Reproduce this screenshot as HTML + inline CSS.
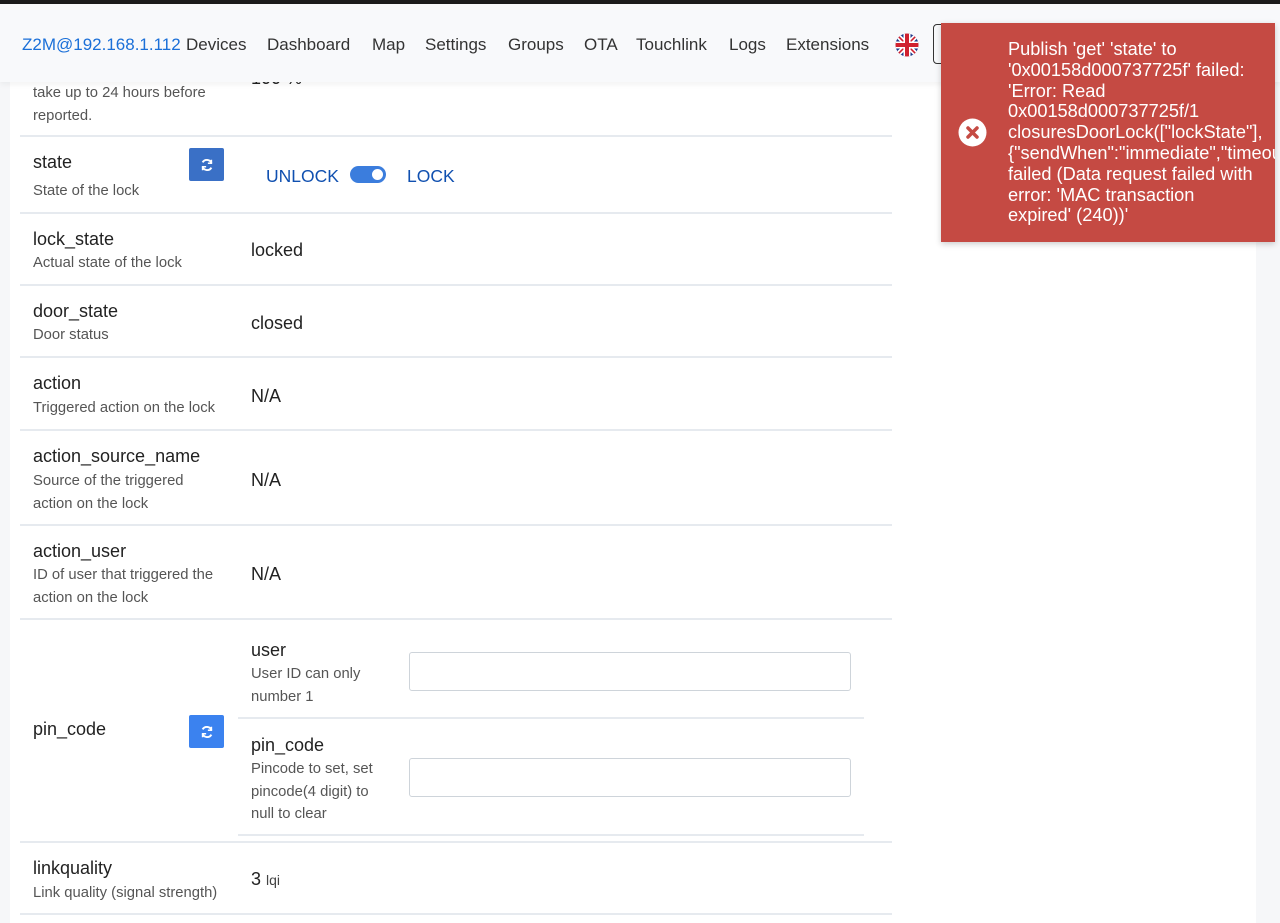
<!DOCTYPE html>
<html><head><meta charset="utf-8"><style>
*{box-sizing:border-box;margin:0;padding:0}
body{width:1280px;height:923px;overflow:hidden;background:#f6f7f9;font-family:"Liberation Sans",sans-serif;position:relative;color:#212529}
.top{position:absolute;left:0;top:0;width:1280px;height:4px;background:#1c1c1c}
.card{position:absolute;left:10px;top:4px;width:1246px;height:919px;background:#fff}
.nav{position:absolute;left:0;top:4px;width:1280px;height:78px;background:#f8f9fb;box-shadow:0 2px 6px rgba(0,0,0,.06);z-index:2}
.nav span{position:absolute;top:31px;font-size:17px;color:#333}
.row{position:absolute;left:20px;width:872px;border-bottom:2px solid #e6eaef}
.t{position:absolute;left:13px;font-size:18px;color:#222}
.d{position:absolute;left:13px;font-size:14.8px;color:#555;line-height:22.5px;width:190px}
.v{position:absolute;left:231px;font-size:18px;color:#222}
.btn{position:absolute;width:35px;height:33px;border-radius:2px;display:flex;align-items:center;justify-content:center}
.inp{position:absolute;left:409px;width:442px;height:39px;border:1px solid #ced4da;border-radius:3px}
.toast{position:absolute;left:941px;top:23px;width:334px;height:219px;background:#c54a43;z-index:3;box-shadow:0 2px 6px rgba(0,0,0,.2);overflow:hidden}
.toast p{position:absolute;left:67px;top:16px;width:300px;color:#fff;font-size:18.2px;line-height:20.8px;white-space:nowrap}
</style></head><body>
<div class="top"></div>
<div class="card"></div>
<div class="nav">
<span style="left:22px;color:#1a6fd8">Z2M@192.168.1.112</span>
<span style="left:186px">Devices</span><span style="left:267px">Dashboard</span><span style="left:372px">Map</span><span style="left:425px">Settings</span><span style="left:508px">Groups</span><span style="left:584px">OTA</span><span style="left:636px">Touchlink</span><span style="left:729px">Logs</span><span style="left:786px">Extensions</span>
<svg style="position:absolute;left:895px;top:29px" width="24" height="24" viewBox="0 0 24 24"><clipPath id="c"><circle cx="12" cy="12" r="11.5"/></clipPath><g clip-path="url(#c)"><rect width="24" height="24" fill="#1f3a8a"/><path d="M0 0L24 24M24 0L0 24" stroke="#fff" stroke-width="5"/><path d="M0 0L24 24M24 0L0 24" stroke="#d0202e" stroke-width="1.6"/><path d="M12 0V24M0 12H24" stroke="#fff" stroke-width="7"/><path d="M12 0V24M0 12H24" stroke="#d0202e" stroke-width="4"/></g></svg>
<div style="position:absolute;left:933px;top:20px;width:150px;height:40px;border:1px solid #333;border-radius:4px"></div>
<div style="position:absolute;left:1114px;top:20px;width:45px;height:40px;background:#ccc;border-radius:4px"></div>
</div>
<div class="row" style="top:82px;height:55px"><div class="d" style="top:0">take up to 24 hours before reported.</div><div class="v" style="top:-14px">100 %</div></div>
<div class="row" style="top:137px;height:77px"><div class="t" style="top:15px">state</div><div class="d" style="top:43px">State of the lock</div>
<div class="btn" style="left:169px;top:11px;background:#3a70c6"><svg width="14" height="14" viewBox="0 0 16 16" fill="none" stroke="#fff" stroke-width="2.2"><path d="M13 6A5.5 5.5 0 0 0 3 5M3 10a5.5 5.5 0 0 0 10 1"/><path d="M13 2v4H9M3 14v-4h4" stroke-width="1.8"/></svg></div>
<div style="position:absolute;left:246px;top:29px;font-size:17.5px;color:#1050b0">UNLOCK</div>
<div style="position:absolute;left:330px;top:29px;width:36px;height:17px;border-radius:9px;background:#3b7ddd"><div style="position:absolute;right:3px;top:3px;width:11px;height:11px;border-radius:50%;background:#fff"></div></div>
<div style="position:absolute;left:387px;top:29px;font-size:17.5px;color:#1050b0">LOCK</div></div>
<div class="row" style="top:214px;height:72px"><div class="t" style="top:15px">lock_state</div><div class="d" style="top:38px">Actual state of the lock</div><div class="v" style="top:26px">locked</div></div>
<div class="row" style="top:286px;height:72px"><div class="t" style="top:15px">door_state</div><div class="d" style="top:38px">Door status</div><div class="v" style="top:27px">closed</div></div>
<div class="row" style="top:358px;height:73px"><div class="t" style="top:15px">action</div><div class="d" style="top:39px;width:200px">Triggered action on the lock</div><div class="v" style="top:28px">N/A</div></div>
<div class="row" style="top:431px;height:95px"><div class="t" style="top:15px">action_source_name</div><div class="d" style="top:39px;width:170px">Source of the triggered action on the lock</div><div class="v" style="top:39px">N/A</div></div>
<div class="row" style="top:526px;height:94px"><div class="t" style="top:15px">action_user</div><div class="d" style="top:38px">ID of user that triggered the action on the lock</div><div class="v" style="top:38px">N/A</div></div>
<div class="row" style="top:620px;height:223px"><div class="t" style="top:99px">pin_code</div>
<div class="btn" style="left:169px;top:95px;background:#3b82ef"><svg width="14" height="14" viewBox="0 0 16 16" fill="none" stroke="#fff" stroke-width="2.2"><path d="M13 6A5.5 5.5 0 0 0 3 5M3 10a5.5 5.5 0 0 0 10 1"/><path d="M13 2v4H9M3 14v-4h4" stroke-width="1.8"/></svg></div>
<div style="position:absolute;left:218px;top:97px;width:626px;border-top:2px solid #e6eaef"></div>
<div style="position:absolute;left:218px;top:214px;width:626px;border-top:2px solid #e6eaef"></div>
<div class="v" style="top:20px">user</div><div class="d" style="left:231px;top:43px;width:130px">User ID can only number 1</div>
<div class="v" style="top:115px">pin_code</div><div class="d" style="left:231px;top:138px;width:130px">Pincode to set, set pincode(4 digit) to null to clear</div>
<div class="inp" style="left:389px;top:32px"></div><div class="inp" style="left:389px;top:138px"></div></div>
<div class="row" style="top:843px;height:72px"><div class="t" style="top:15px">linkquality</div><div class="d" style="top:39px;width:220px">Link quality (signal strength)</div><div class="v" style="top:26px">3 <span style="font-size:14px;color:#444">lqi</span></div></div>
<div class="toast"><svg style="position:absolute;left:17px;top:95px" width="29" height="29" viewBox="0 0 29 29"><circle cx="14.5" cy="14.5" r="14" fill="#fff"/><path d="M10 10L19 19M19 10L10 19" stroke="#c54a43" stroke-width="3.5" stroke-linecap="round"/></svg>
<p>Publish 'get' 'state' to<br>'0x00158d000737725f' failed:<br>'Error: Read<br>0x00158d000737725f/1<br>closuresDoorLock(["lockState"],<br>{"sendWhen":"immediate","timeout<br>failed (Data request failed with<br>error: 'MAC transaction<br>expired' (240))'</p></div>
</body></html>
